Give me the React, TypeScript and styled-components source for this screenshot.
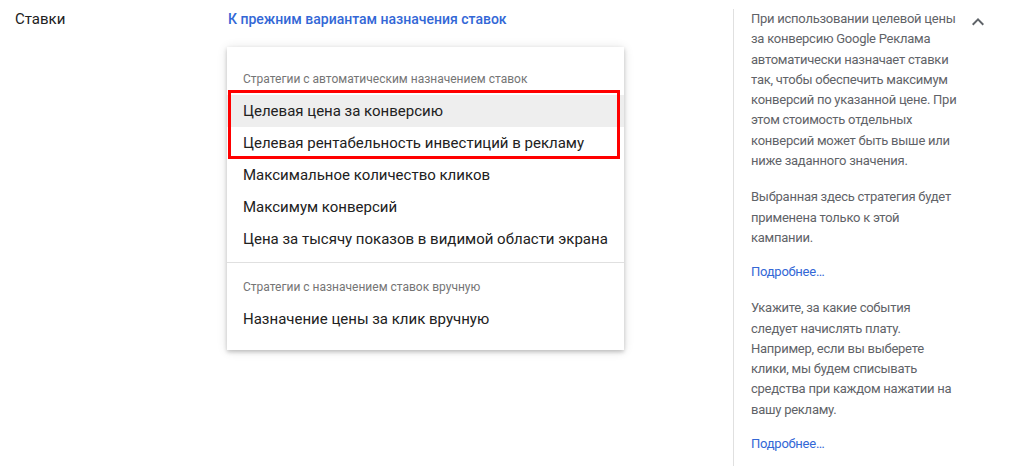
import React from 'react';
import styled, { createGlobalStyle } from 'styled-components';

const Global = createGlobalStyle`
  html, body { margin: 0; padding: 0; background: #fff; }
  body { font-family: Roboto, "Noto Sans", Arial, sans-serif; }
`;

const autoItems = [
  'Целевая цена за конверсию',
  'Целевая рентабельность инвестиций в рекламу',
  'Максимальное количество кликов',
  'Максимум конверсий',
  'Цена за тысячу показов в видимой области экрана',
];

const helpBlocks: { lines: string[]; more?: boolean }[] = [
  {
    lines: [
      'При использовании целевой цены',
      'за конверсию Google Реклама',
      'автоматически назначает ставки',
      'так, чтобы обеспечить максимум',
      'конверсий по указанной цене. При',
      'этом стоимость отдельных',
      'конверсий может быть выше или',
      'ниже заданного значения.',
    ],
  },
  {
    lines: ['Выбранная здесь стратегия будет', 'применена только к этой', 'кампании.'],
    more: true,
  },
  {
    lines: [
      'Укажите, за какие события',
      'следует начислять плату.',
      'Например, если вы выберете',
      'клики, мы будем списывать',
      'средства при каждом нажатии на',
      'вашу рекламу.',
    ],
    more: true,
  },
];

export default function App() {
  return (
    <>
      <Global />
      <Section>
        <Label>Ставки</Label>
        <Main>
          <BackLink>К прежним вариантам назначения ставок</BackLink>
          <Menu>
            <GroupHeader>Стратегии с автоматическим назначением ставок</GroupHeader>
            {autoItems.map((t, i) => (
              <Item key={t} active={i === 0}>{t}</Item>
            ))}
            <Divider />
            <GroupHeader>Стратегии с назначением ставок вручную</GroupHeader>
            <Item>Назначение цены за клик вручную</Item>
            <Highlight />
          </Menu>
        </Main>
        <Help>
          {helpBlocks.map((b, i) => (
            <React.Fragment key={i}>
              <Para>
                {b.lines.map((l) => (
                  <Line key={l}>{l}</Line>
                ))}
              </Para>
              {b.more && <More>Подробнее…</More>}
            </React.Fragment>
          ))}
        </Help>
        <Collapse>
          <svg width="24" height="24" viewBox="0 0 24 24">
            <path d="M7.41 15.41 12 10.83l4.59 4.58L18 14l-6-6-6 6z" fill="#5f6368" />
          </svg>
        </Collapse>
      </Section>
    </>
  );
}

const Section = styled.div`
  display: flex;
  align-items: flex-start;
  width: 1010px;
  height: 466px;
  overflow: hidden;
`;

const Label = styled.div`
  width: 228px;
  padding: 9px 0 0 15px;
  box-sizing: border-box;
  font-size: 15px;
  line-height: 20px;
  color: #212121;
`;

const Main = styled.div`
  width: 505px;
  padding-top: 9px;
`;

const BackLink = styled.a`
  display: block;
  font-size: 14px;
  font-weight: 500;
  line-height: 20px;
  color: #3367d6;
  cursor: pointer;
`;

const Menu = styled.div`
  position: relative;
  margin: 18px 0 0 -1px;
  width: 397px;
  padding: 16px 0 15px;
  background: #fff;
  box-shadow: 0 2px 4px rgba(0, 0, 0, 0.2), 0 1px 10px rgba(0, 0, 0, 0.12);
`;

const GroupHeader = styled.div`
  height: 32px;
  line-height: 32px;
  padding-left: 16px;
  font-size: 12px;
  color: #757575;
`;

const Item = styled.div<{ active?: boolean }>`
  height: 32px;
  line-height: 32px;
  padding-left: 16px;
  font-size: 15px;
  color: #212121;
  background: ${(p) => (p.active ? '#eeeeee' : 'transparent')};
`;

const Divider = styled.div`
  height: 1px;
  margin: 7px 0 8px;
  background: #e0e0e0;
`;

const Highlight = styled.div`
  position: absolute;
  left: 1px;
  top: 43px;
  width: 386px;
  height: 63px;
  border: 3px solid #ff0000;
`;

const Help = styled.div`
  align-self: stretch;
  margin-top: 9px;
  border-left: 1px solid #e0e0e0;
  padding: 0 0 0 17px;
  width: 212px;
  font-size: 13px;
  letter-spacing: -0.25px;
  line-height: 20.3px;
  color: #5f6368;
`;

const Para = styled.p`
  margin: 0 0 16px;
`;

const Line = styled.span`
  display: block;
  white-space: nowrap;
`;

const More = styled.a`
  display: block;
  line-height: 16px;
  margin-bottom: 18px;
  color: #3367d6;
  cursor: pointer;
`;

const Collapse = styled.div`
  margin: 10px 0 0 3px;
  width: 24px;
  height: 24px;
`;
